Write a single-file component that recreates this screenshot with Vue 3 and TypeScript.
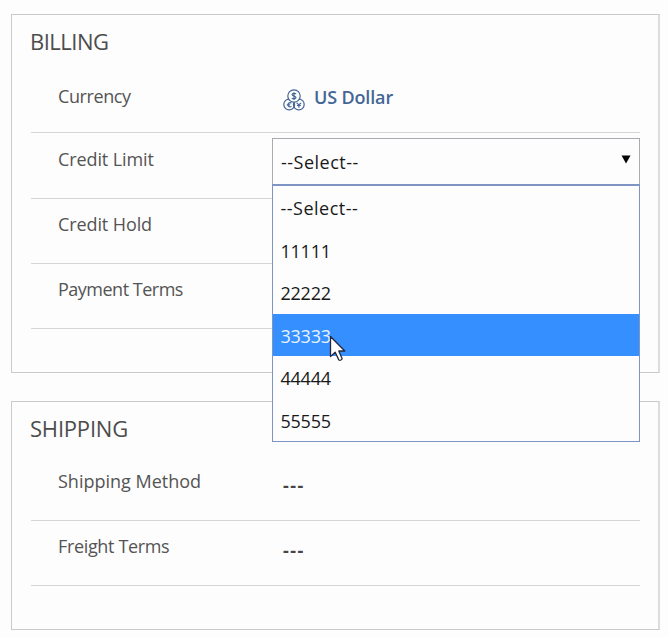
<script setup lang="ts">
import { ref } from 'vue'

const options: string[] = ['--Select--', '11111', '22222', '33333', '44444', '55555']
const active = ref(3)
</script>

<template>
  <main class="page">
    <section class="panel billing">
      <h2 class="title t-billing">BILLING</h2>
      <div class="row currency">
        <span class="label l-currency">Currency</span>
        <span class="value">
          <svg class="coins" viewBox="0 0 22 22" fill="none" stroke="#456695" stroke-width="1.2">
            <circle cx="6.2" cy="15.500" r="5.400" />
            <circle cx="15.800" cy="15.500" r="5.400" />
            <circle cx="11" cy="7" r="6.200" fill="#fdfdfd" />
            <path d="M13.100 5c-.6-.8-3.900-1.100-4 .6-.1 1.700 3.900 1.200 3.900 3 0 1.700-3.300 1.600-4.200.6M11 3.300v7.800" />
            <path d="M8.400 14.200c-1.300-1.100-3.400-.3-3.400 1.700s2.100 2.600 3.500 1.500M3.800 15.900h3.300M13.700 13.800l2.200 2.200 2.200-2.200M15.900 16v2.800M13.900 16.500h4" />
          </svg>
          <a class="link">US Dollar</a>
        </span>
      </div>
      <div class="row first-line">
        <span class="label l-limit">Credit Limit</span>
        <div class="picker">
          <div class="select">
            <span class="opt-text">--Select--</span>
            <svg class="arrow" viewBox="0 0 10 9"><path d="M.5.500h9L5 8.500z" fill="#050505" /></svg>
          </div>
          <ul class="list">
            <li v-for="(o, i) in options" :key="o" :class="{ active: i === active, num: i > 0 }" @mouseenter="active = i">
              {{ o }}
            </li>
          </ul>
          <svg class="cursor" viewBox="0 0 18 28">
            <path d="M1.500 1.500v20l4.700-4.200 3.600 7.600c1 1 3.600-.2 3.300-1.500L9.800 16h6z" fill="#fff" stroke="#26283a" stroke-width="1.300" stroke-linejoin="round" />
          </svg>
        </div>
      </div>
      <div class="row raised"><span class="label l-hold">Credit Hold</span></div>
      <div class="row raised"><span class="label l-terms">Payment Terms</span></div>
    </section>

    <section class="panel shipping">
      <h2 class="title t-shipping">SHIPPING</h2>
      <div class="row method">
        <span class="label l-method">Shipping Method</span>
        <span class="value dashes">---</span>
      </div>
      <div class="row raised">
        <span class="label l-freight">Freight Terms</span>
        <span class="value dashes">---</span>
      </div>
    </section>
  </main>
</template>

<style>
body {
  background: #fdfdfd;
}
</style>

<style scoped>
.page {
  box-sizing: border-box;
  height: 638px;
  padding: 14px 8px 0 11px;
  font-family: 'Open Sans', 'Noto Sans', sans-serif;
  font-size: 18px;
  color: #545454;
}
.panel {
  box-sizing: border-box;
  width: 649px;
  padding: 0 19px;
  border: 1px solid #c9cacd;
  border-right: 2px solid #dcdcde;
}
.billing {
  height: 359px;
}
.shipping {
  height: 229px;
  margin-top: 28px;
}
.title {
  margin: 0 0 0 -1px;
  height: 53px;
  padding-top: 12px;
  box-sizing: border-box;
  font-size: 22px;
  line-height: 28px;
  font-weight: 400;
  color: #4c4c4c;
  white-space: nowrap;
}
.t-billing {
  letter-spacing: -0.5px;
}
.t-shipping {
  letter-spacing: -0.2px;
}
.row {
  display: flex;
  box-sizing: border-box;
  height: 65px;
  width: 609px;
  padding-left: 27px;
  border-bottom: 1px solid #d5d5d7;
}
.first-line,
.method {
  height: 66px;
}
.label {
  width: 214px;
  padding-top: 14px;
  line-height: 25px;
  letter-spacing: -0.4px;
  white-space: nowrap;
}
.currency .label {
  padding-top: 16px;
}
.raised .label {
  padding-top: 13px;
}
.l-limit,
.l-hold {
  letter-spacing: -0.1px;
}
.l-terms {
  letter-spacing: -0.5px;
}
.l-method {
  letter-spacing: 0;
}
.l-freight {
  letter-spacing: -0.35px;
}
.value {
  display: flex;
  padding: 15px 0 0 11px;
  line-height: 28px;
}
.coins {
  width: 22px;
  height: 22px;
  margin-top: 6px;
}
.link {
  margin-left: 9px;
  font-weight: 600;
  color: #456695;
  letter-spacing: -0.15px;
}
.dashes {
  font-weight: 700;
  color: #454545;
  letter-spacing: 1.5px;
}
.method .dashes {
  padding-top: 16px;
}
.picker {
  position: relative;
  margin-top: 5px;
  width: 368px;
  height: 47px;
  color: #191919;
}
.select {
  display: flex;
  justify-content: space-between;
  align-items: center;
  box-sizing: border-box;
  height: 47px;
  padding: 0 8px;
  border: 1px solid #a9abb1;
  background: #fdfdfd;
}
.opt-text {
  letter-spacing: 0.5px;
}
.arrow {
  width: 10px;
  height: 9px;
  margin-top: -4px;
}
.list {
  position: absolute;
  z-index: 1;
  top: 46px;
  left: 0;
  box-sizing: border-box;
  width: 368px;
  height: 258px;
  margin: 0;
  padding: 0;
  list-style: none;
  border: 1px solid #7d94c4;
  border-top-width: 2px;
  background: #fdfdfd;
}
.list li {
  height: 42.5px;
  padding-left: 7.5px;
  line-height: 44px;
  letter-spacing: 0.5px;
}
.list .num {
  letter-spacing: -0.25px;
}
.list .active {
  background: #358fff;
  color: #e8f3ff;
}
.cursor {
  position: absolute;
  z-index: 2;
  top: 197px;
  left: 57px;
  width: 18px;
  height: 28px;
}
</style>
